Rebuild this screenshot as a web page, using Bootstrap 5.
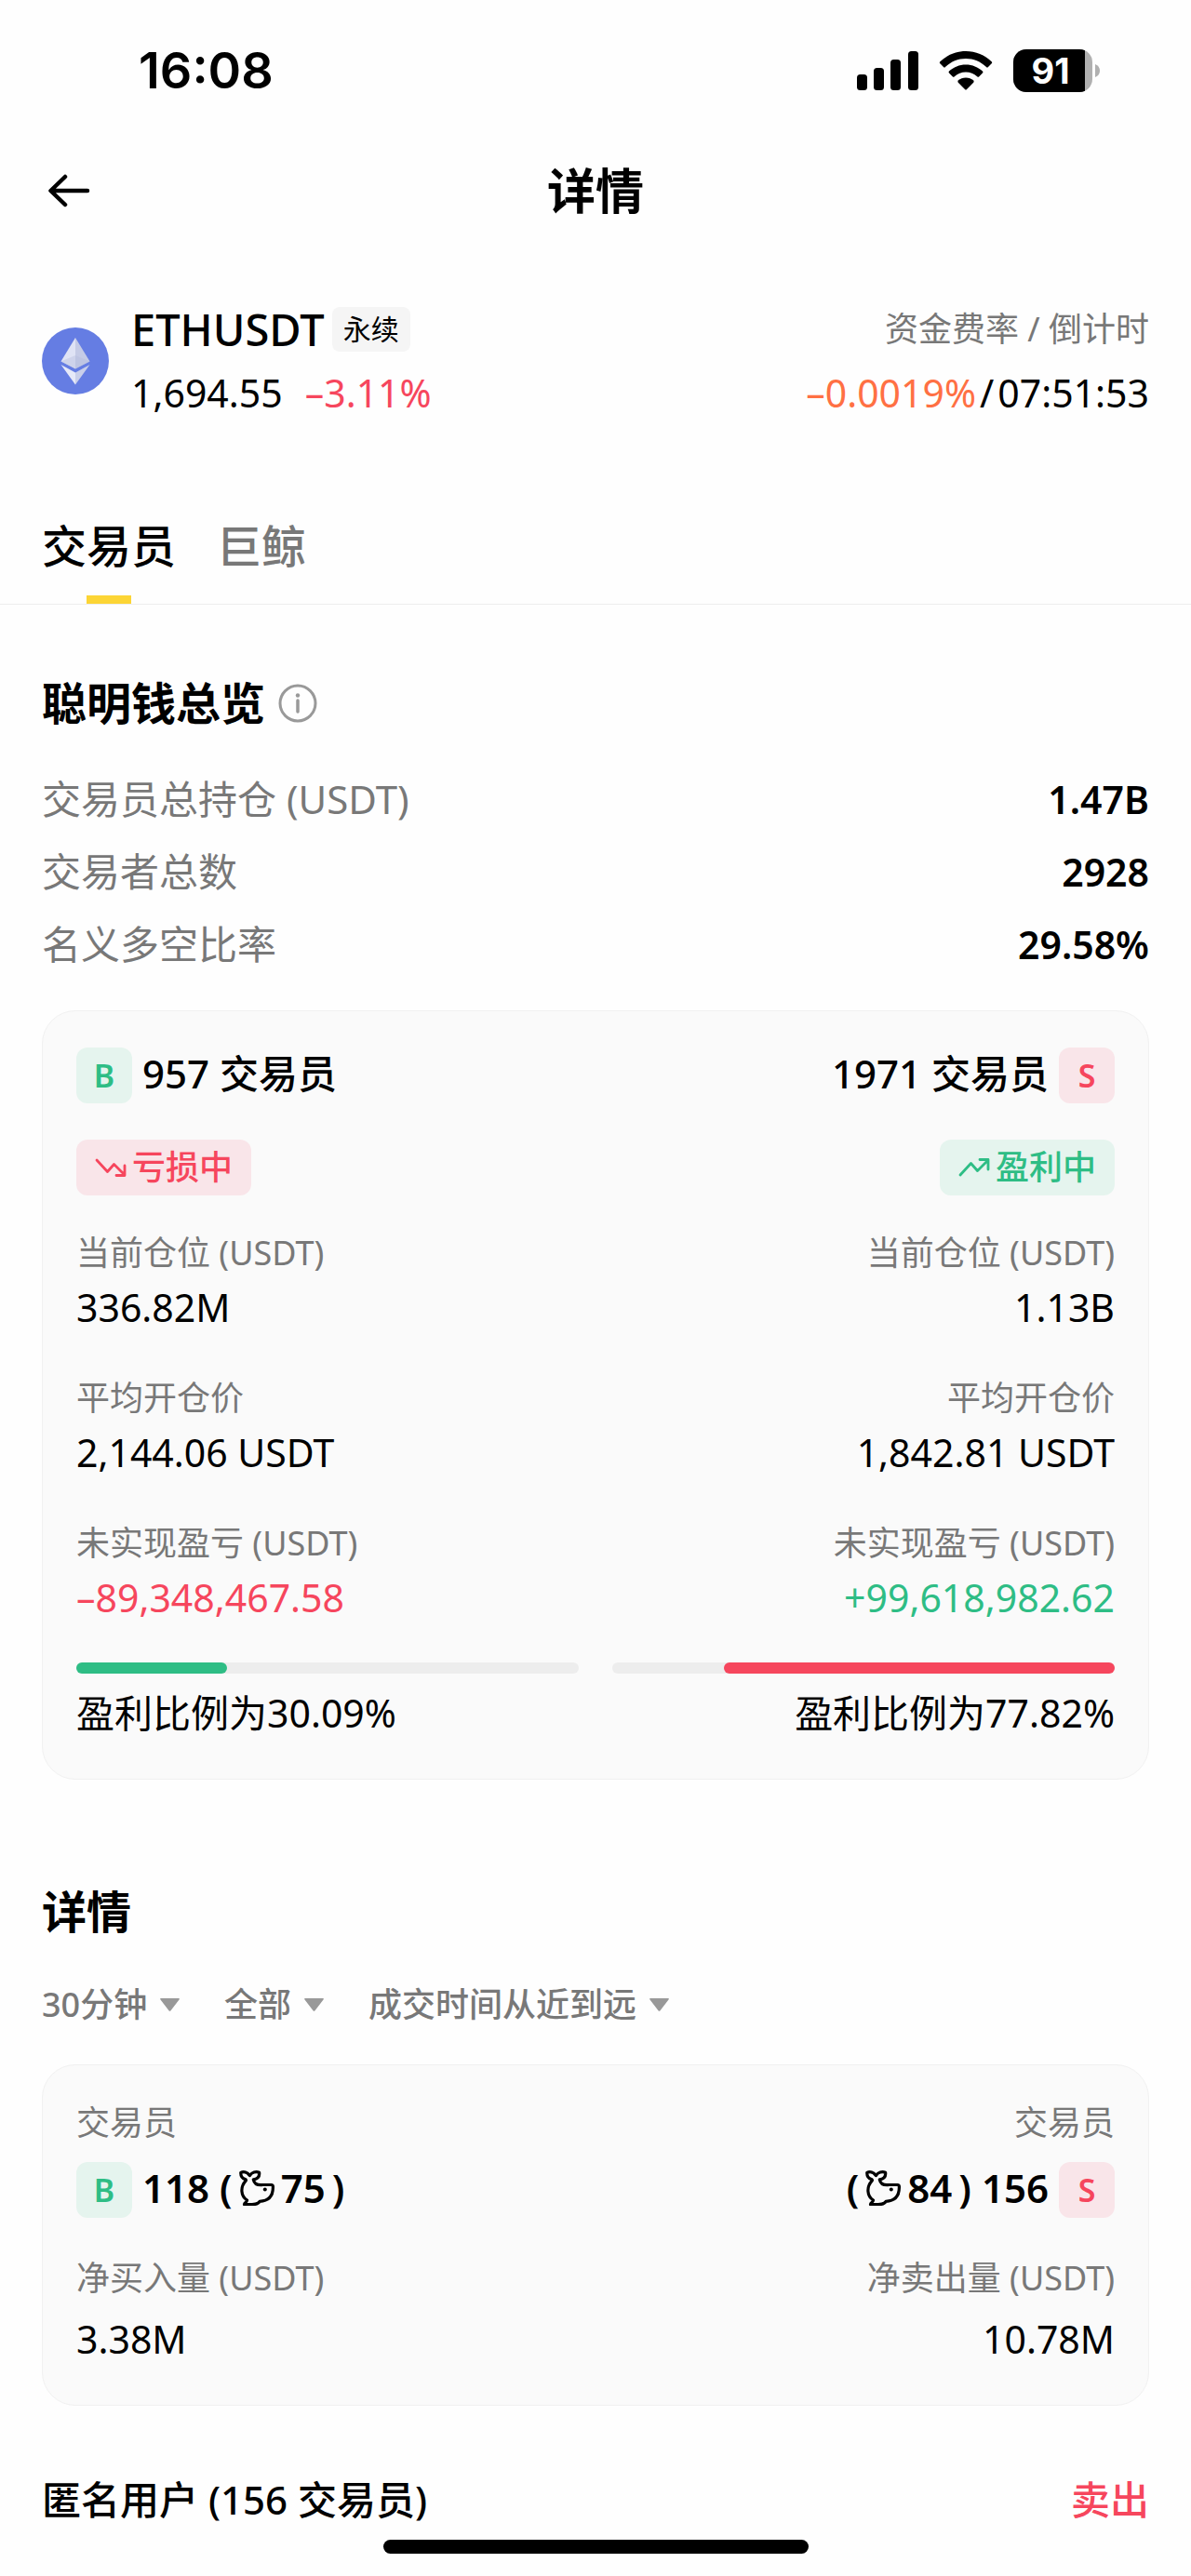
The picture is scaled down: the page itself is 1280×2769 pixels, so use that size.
<!DOCTYPE html>
<html lang="zh-CN">
<head>
<meta charset="utf-8">
<meta name="viewport" content="width=device-width, initial-scale=1">
<title>详情</title>
<link href="https://cdn.jsdelivr.net/npm/bootstrap@5.3.0/dist/css/bootstrap.min.css" rel="stylesheet">
<style>
  :root { --buy: #2ebd85; --sell: #f6465d; --muted: #787878; --ui: "Noto Sans", "Noto Sans CJK SC", sans-serif; }
  body { background: #fefefe; color: #000; font-family: var(--ui); font-size: 41px; line-height: 56px; }
  .page-x { padding-left: 45px; padding-right: 45px; }
  .t-buy { color: var(--buy); }
  .t-sell { color: var(--sell); }
  .t-rate { color: #ff7043; }

  .status-bar { height: 152px; padding: 0 97px 0 149px; font-family: Inter, sans-serif; }
  .clock { font-size: 54px; font-weight: 600; }
  .app-head { height: 106px; display: grid; grid-template-columns: 1fr auto 1fr; align-items: center; }
  .app-head h1 { font-size: 52px; line-height: 60px; font-weight: 700; }
  .back-btn { padding: 0; border: 0; background: none; line-height: 0; justify-self: start; margin-left: 6px; }

  .ticker { padding-top: 68px; }
  .ticker-rows { row-gap: 12px; }
  .symbol { font-size: 47px; font-weight: 500; line-height: 56px; }
  .kind-tag { font-size: 30px; line-height: 48px; padding: 0 12px; border-radius: 8px; background: #f5f5f5; }
  .caption-36 { font-size: 36px; line-height: 50px; color: var(--muted); }

  .view-tabs { margin-top: 107px; gap: 44px; border-bottom: 1px solid #eee; }
  .view-tabs a { font-size: 48px; line-height: 60px; font-weight: 500; color: var(--muted); text-decoration: none; }
  .view-tabs a::after { content: ""; width: 48px; height: 9px; margin-top: 23px; }
  .view-tabs a.active { color: #000; }
  .view-tabs a.active::after { background: #fcd535; }

  .sec-title { font-size: 48px; line-height: 60px; font-weight: 700; }
  .overview { padding-top: 76px; }
  .overview-head { gap: 14px; }
  .totals { margin-top: 46px; line-height: 54px; row-gap: 24px; }
  .totals dt { font-size: 42px; font-weight: 400; color: var(--muted); }
  .totals dd { font-weight: 600; }

  .panel { margin-top: 44px; padding: 39px 36px 43px; background: #fafafa; border: 1px solid #f1f1f1; border-radius: 36px; }
  .side-badge { width: 60px; height: 60px; border-radius: 12px; font-size: 34px; font-weight: 600; }
  .soft-buy { background: #e5f4ee; color: var(--buy); }
  .soft-sell { background: #f9e5e9; color: var(--sell); }
  .head-row { gap: 11px; font-size: 42px; font-weight: 500; }
  .pl-tag { height: 60px; margin-top: 39px; padding: 0 20px; gap: 6px; border-radius: 12px; font-size: 36px; font-weight: 500; }
  .metric { margin-top: 45px; row-gap: 5px; }
  .metric-first { margin-top: 37px; }
  .halves { column-gap: 36px; }
  .win-bar { height: 12px; margin-top: 42px; border-radius: 6px; background: #ededed; }
  .win-bar > div { border-radius: 6px; }
  .fill-buy { background: var(--buy); }
  .fill-sell { background: var(--sell); }
  .win-text { margin-top: 14px; }

  .detail { padding-top: 112px; }
  .filters { margin-top: 42px; gap: 48px; }
  .filters select { appearance: none; height: 56px; border: 0; background: none; padding: 0; margin: 0; font: 500 36px/56px var(--ui); color: var(--muted); }
  .filters svg { margin-left: 13px; }
  .panel-flow { margin-top: 36px; padding-top: 37px; }
  .panel-flow .head-row { margin-top: 17px; font-weight: 600; }
  .panel-flow .metric { margin-top: 40px; row-gap: 12px; }
  .whale { gap: 7px; }
  .trade-row { margin-top: 73px; font-size: 42px; font-weight: 500; }
  .home-bar { width: 457px; height: 15px; margin: 15px auto 24px; border-radius: 8px; background: #000; }
</style>
</head>
<body>
<svg class="d-none" aria-hidden="true">
  <symbol id="whale" viewBox="0 0 38 38"><path d="M1.8 2.4C5 .8 9 2 11.4 5.6C13.5 2 18 .8 21.6 2.2C22.200 6.500 20.300 9 15.300 9.800C16.200 14 20 16.200 25.500 15.500L34.500 15.500Q36.400 15.500 36.400 17.500C36.600 27.500 31.500 33 22 33.300C20.500 36.600 16 37 5.500 36.600C5.600 34.600 8.500 34.300 8.600 32C1.800 27.800.8 18 7.200 11.200C7.600 10.600 7.600 10 6.600 9.600C3 8.600 1.600 6 1.800 2.400Z" fill="none" stroke="#000" stroke-width="3.200" stroke-linejoin="round"/><circle cx="27.800" cy="20.600" r="2"/></symbol>
  <symbol id="caret" viewBox="0 0 21 14"><path d="M1 0H20Q21.500 0 20.500 1.500L11.500 13.200Q10.500 14.500 9.500 13.200L.5 1.500Q-.5 0 1 0Z" fill="#999"/></symbol>
</svg>

<header>
  <div class="status-bar d-flex align-items-center justify-content-between">
    <time class="clock">16:08</time>
    <svg width="262" height="46" viewBox="0 0 262 46" role="img" aria-label="信号、无线网络、电量 91">
      <rect x="0" y="27" width="11" height="17" rx="3.500"/><rect x="18" y="20" width="11" height="24" rx="3.500"/><rect x="36" y="11" width="11" height="33" rx="3.500"/><rect x="55" y="2" width="11" height="42" rx="3.500"/>
      <g transform="translate(88 2)"><path d="M29 0C39.500 0 49.500 4.200 56.700 11.300Q57.700 12.300 56.700 13.300L53 17Q52 18 51 17C45 11.200 37.300 8 29 8S13 11.200 7 17Q6 18 5 17L1.300 13.300Q.3 12.300 1.300 11.300C8.500 4.200 18.500 0 29 0Z"/><path d="M29 14.500C36 14.500 42.300 17.200 47 21.600Q48 22.600 47 23.600L43.300 27.200Q42.300 28.200 41.200 27.200C37.900 24.200 33.600 22.500 29 22.500S20.100 24.200 16.800 27.200Q15.700 28.200 14.700 27.200L11 23.600Q10 22.600 11 21.600C15.700 17.200 22 14.500 29 14.500Z"/><path d="M29 28.500C32.200 28.500 35 29.700 37.200 31.600Q38.200 32.600 37.200 33.700L30 41Q29 42 28 41L20.800 33.700Q19.800 32.600 20.800 31.600C23 29.700 25.800 28.500 29 28.500Z"/></g>
      <clipPath id="level"><rect x="168" y="0" width="77" height="46"/></clipPath>
      <rect x="168" width="85" height="46" rx="14" fill="#b0b0b0"/><rect x="168" width="85" height="46" rx="14" clip-path="url(#level)"/>
      <path d="M256 16Q261 18 261 23T256 30Z" fill="#b0b0b0"/>
      <text x="208" y="37" fill="#fff" font-family="Inter, sans-serif" font-size="38" font-weight="700" text-anchor="middle">91</text>
    </svg>
  </div>
  <div class="app-head page-x">
    <button class="back-btn" type="button" aria-label="返回"><svg width="46" height="36" viewBox="0 0 46 36" fill="none" stroke="#000" stroke-width="4.500" stroke-linecap="round" stroke-linejoin="round"><path d="M43 18H4M19 3L3.500 18L19 33"/></svg></button>
    <h1 class="m-0">详情</h1>
  </div>
</header>

<main>
  <section class="ticker page-x d-flex align-items-center">
    <svg class="flex-shrink-0" width="72" height="72" viewBox="0 0 72 72" aria-hidden="true"><circle cx="36" cy="36" r="36" fill="#657de3"/><path d="M36 11L20.500 36.500L36 44.500Z" fill="#dfe3f5"/><path d="M36 11L51.500 36.500L36 44.500Z" fill="#c5cbe6"/><path d="M20.500 36.500L36 30L51.500 36.500L36 44.500Z" fill="#b3bbdc" opacity=".4"/><path d="M20.500 40L36 48.500V61.500Z" fill="#e6e9f8"/><path d="M51.500 40L36 48.500V61.500Z" fill="#c9cfea"/></svg>
    <div class="ticker-rows d-flex flex-column flex-grow-1 ms-4">
      <div class="d-flex align-items-center justify-content-between">
        <div class="d-flex align-items-center gap-2"><span class="symbol">ETHUSDT</span><span class="kind-tag">永续</span></div>
        <span class="caption-36">资金费率 / 倒计时</span>
      </div>
      <div class="d-flex align-items-center justify-content-between">
        <div class="d-flex gap-4"><span>1,694.55</span><span class="t-sell">–3.11%</span></div>
        <div class="d-flex gap-1"><span class="t-rate">–0.0019%</span><span>/</span><time>07:51:53</time></div>
      </div>
    </div>
  </section>

  <nav class="view-tabs page-x d-flex" aria-label="视图">
    <a href="#traders" class="active d-flex flex-column align-items-center" aria-current="page">交易员</a>
    <a href="#whales" class="d-flex flex-column align-items-center">巨鲸</a>
  </nav>

  <section class="overview page-x" id="traders">
    <div class="overview-head d-flex align-items-center">
      <h2 class="sec-title m-0">聪明钱总览</h2>
      <svg width="42" height="42" viewBox="0 0 42 42" fill="none" stroke="#999" role="img" aria-label="说明"><circle cx="21" cy="21" r="19" stroke-width="3"/><path d="M21 18V30" stroke-width="3.500" stroke-linecap="round"/><circle cx="21" cy="12.500" r="2.200" fill="#999" stroke="none"/></svg>
    </div>
    <dl class="totals d-flex flex-column mb-0">
      <div class="d-flex justify-content-between"><dt>交易员总持仓 (USDT)</dt><dd class="m-0">1.47B</dd></div>
      <div class="d-flex justify-content-between"><dt>交易者总数</dt><dd class="m-0">2928</dd></div>
      <div class="d-flex justify-content-between"><dt>名义多空比率</dt><dd class="m-0">29.58%</dd></div>
    </dl>

    <div class="panel halves d-flex">
      <div class="col d-flex flex-column align-items-start">
        <div class="head-row d-flex align-items-start"><span class="side-badge soft-buy d-flex align-items-center justify-content-center">B</span><span>957 交易员</span></div>
        <div class="pl-tag soft-sell d-flex align-items-center"><svg width="34" height="22" viewBox="0 0 34 22" fill="none" stroke="currentColor" stroke-width="2.800" stroke-linecap="round" stroke-linejoin="round" aria-hidden="true"><path d="M2 3L13.500 15.500L20.500 7.500L32 19M32 9V19.500H23"/></svg>亏损中</div>
        <div class="metric metric-first d-flex flex-column"><span class="caption-36">当前仓位 (USDT)</span><span>336.82M</span></div>
        <div class="metric d-flex flex-column"><span class="caption-36">平均开仓价</span><span>2,144.06 USDT</span></div>
        <div class="metric d-flex flex-column"><span class="caption-36">未实现盈亏 (USDT)</span><span class="t-sell">–89,348,467.58</span></div>
        <div class="win-bar w-100 d-flex"><div class="fill-buy" style="width:30.09%"></div></div>
        <div class="win-text">盈利比例为30.09%</div>
      </div>
      <div class="col d-flex flex-column align-items-end text-end">
        <div class="head-row d-flex align-items-start"><span>1971 交易员</span><span class="side-badge soft-sell d-flex align-items-center justify-content-center">S</span></div>
        <div class="pl-tag soft-buy d-flex align-items-center"><svg width="34" height="22" viewBox="0 0 34 22" fill="none" stroke="currentColor" stroke-width="2.800" stroke-linecap="round" stroke-linejoin="round" aria-hidden="true"><path d="M2 19L13.500 6.500L20.500 14.500L32 3M32 13V2.500H23"/></svg>盈利中</div>
        <div class="metric metric-first d-flex flex-column"><span class="caption-36">当前仓位 (USDT)</span><span>1.13B</span></div>
        <div class="metric d-flex flex-column"><span class="caption-36">平均开仓价</span><span>1,842.81 USDT</span></div>
        <div class="metric d-flex flex-column"><span class="caption-36">未实现盈亏 (USDT)</span><span class="t-buy">+99,618,982.62</span></div>
        <div class="win-bar w-100 d-flex justify-content-end"><div class="fill-sell" style="width:77.82%"></div></div>
        <div class="win-text">盈利比例为77.82%</div>
      </div>
    </div>
  </section>

  <section class="detail page-x">
    <h2 class="sec-title m-0">详情</h2>
    <form class="filters d-flex">
      <div class="d-flex align-items-center"><select aria-label="周期"><option>30分钟</option></select><svg width="21" height="14" aria-hidden="true"><use href="#caret"/></svg></div>
      <div class="d-flex align-items-center"><select aria-label="方向"><option>全部</option></select><svg width="21" height="14" aria-hidden="true"><use href="#caret"/></svg></div>
      <div class="d-flex align-items-center"><select aria-label="排序"><option>成交时间从近到远</option></select><svg width="21" height="14" aria-hidden="true"><use href="#caret"/></svg></div>
    </form>

    <div class="panel panel-flow halves d-flex">
      <div class="col d-flex flex-column align-items-start">
        <span class="caption-36">交易员</span>
        <div class="head-row d-flex align-items-start"><span class="side-badge soft-buy d-flex align-items-center justify-content-center">B</span><span>118</span><span class="whale d-flex align-items-center"><span>(</span><svg width="38" height="38" aria-hidden="true"><use href="#whale"/></svg><span>75</span><span>)</span></span></div>
        <div class="metric d-flex flex-column"><span class="caption-36">净买入量 (USDT)</span><span>3.38M</span></div>
      </div>
      <div class="col d-flex flex-column align-items-end text-end">
        <span class="caption-36">交易员</span>
        <div class="head-row d-flex align-items-start"><span class="whale d-flex align-items-center"><span>(</span><svg width="38" height="38" aria-hidden="true"><use href="#whale"/></svg><span>84</span><span>)</span></span><span>156</span><span class="side-badge soft-sell d-flex align-items-center justify-content-center">S</span></div>
        <div class="metric d-flex flex-column"><span class="caption-36">净卖出量 (USDT)</span><span>10.78M</span></div>
      </div>
    </div>

    <div class="trade-row d-flex justify-content-between"><span>匿名用户 (156 交易员)</span><span class="t-sell">卖出</span></div>
  </section>
</main>
<div class="home-bar"></div>
<script src="https://cdn.jsdelivr.net/npm/bootstrap@5.3.0/dist/js/bootstrap.bundle.min.js"></script>
</body>
</html>
